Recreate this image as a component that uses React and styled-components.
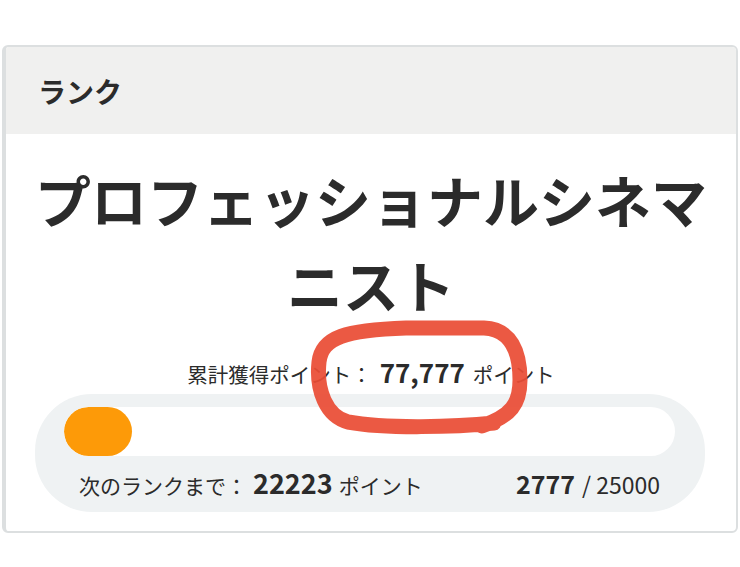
import styled, { createGlobalStyle } from "styled-components";

const GlobalStyle = createGlobalStyle`
  body {
    margin: 0;
    background: #fff;
    font-family: "Noto Sans CJK JP", "Noto Sans", sans-serif;
    color: #2b2b2b;
  }
`;

const Page = styled.div`
  padding: 45px 2px 0;
`;

const Card = styled.section`
  position: relative;
  border: 2px solid #dcdfe0;
  border-left-width: 4px;
  border-radius: 6px;
  overflow: hidden;
  background: #fff;
`;

const Header = styled.h2`
  margin: 0;
  height: 87px;
  display: flex;
  align-items: center;
  padding-left: 32px;
  background: #f0f0ef;
  font-size: 28px;
  font-weight: 700;
`;

const Body = styled.div`
  display: flex;
  flex-direction: column;
  align-items: center;
  padding: 22px 0 19px;
`;

const Title = styled.h1`
  margin: 0;
  max-width: 680px;
  font-size: 56px;
  line-height: 85px;
  font-weight: 700;
  text-align: center;
`;

const Total = styled.p`
  margin: 31px 0 0;
  font-size: 20.5px;
  line-height: 30px;
  display: flex;
  align-items: baseline;
  gap: 8px;
`;

const Num = styled.strong`
  font-size: ${(p) => p.size || 24}px;
  font-weight: 700;
`;

const Track = styled.div`
  align-self: stretch;
  margin: 5px 31px 0 29px;
  background: #eff2f3;
  border-radius: 57px;
  padding: 13px 30px 6px 29px;
`;

const Bar = styled.div`
  height: 49px;
  background: #fff;
  border-radius: 25px;
  overflow: hidden;
`;

const Fill = styled.div`
  height: 100%;
  background: #fd9a08;
  border-radius: 25px;
`;

const Row = styled.div`
  display: flex;
  justify-content: space-between;
  align-items: baseline;
  padding: 4px 15px 0;
  height: 46px;
  line-height: 46px;
  font-size: 21px;
`;

const Part = styled.span`
  display: flex;
  align-items: baseline;
  gap: ${(p) => p.gap || 0}px;
  font-size: ${(p) => p.size || 21}px;
`;

const Mark = styled.svg`
  position: absolute;
  left: 0;
  top: -45px;
  pointer-events: none;
`;

export default function App() {
  const current = 2777;
  const goal = 25000;
  return (
    <Page>
      <GlobalStyle />
      <Card>
        <Header>ランク</Header>
        <Body>
          <Title>プロフェッショナルシネマニスト</Title>
          <Total>
            <span>累計獲得ポイント：</span>
            <Num size={26}>77,777</Num>
            <span>ポイント</span>
          </Total>
          <Track>
            <Bar>
              <Fill style={{ width: `${(current / goal) * 100}%` }} />
            </Bar>
            <Row>
              <Part gap={6}>
                <span>次のランクまで：</span>
                <Num size={27}>22223</Num>
                <span>ポイント</span>
              </Part>
              <Part gap={7} size={23}>
                <Num size={25}>2777</Num>
                <span>/ 25000</span>
              </Part>
            </Row>
          </Track>
        </Body>
        <Mark width="740" height="567" viewBox="0 0 740 567">
          <path
            d="M488 421 C450 425 380 427 342 420 C320 414 310 388 313 360 C316 335 340 328 400 326 L478 326 C505 327 514 350 514 378 C514 402 505 414 476 424"
            fill="none"
            stroke="#ea4c35"
            strokeWidth="15"
            strokeLinecap="round"
            opacity="0.93"
          />
        </Mark>
      </Card>
    </Page>
  );
}
